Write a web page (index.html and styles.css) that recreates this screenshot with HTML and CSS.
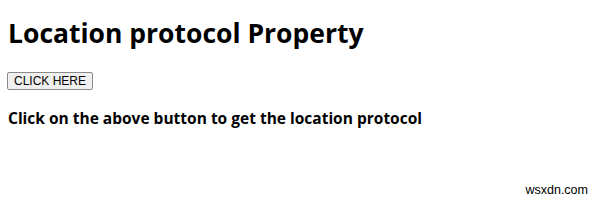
FILE: index.html
```html
<!DOCTYPE html>
<html>
<head>
<meta charset="utf-8">
<link rel="stylesheet" href="styles.css">
</head>
<body>
<h1 class="title">Location protocol Property</h1>
<button class="btn">CLICK HERE</button>
<h3 class="result">Click on the above button to get the location protocol</h3>
<div class="mark">wsxdn.com</div>
</body>
</html>
```
FILE: styles.css
```css
html, body { margin: 0; padding: 0; background: #fff; }
body { padding: 8px; font-family: "Open Sans", sans-serif; color: #000; height: 211px; box-sizing: border-box; position: relative; }
.title { font-size: 26.5px; font-weight: 700; margin: 7px 0 21px; line-height: 36px; }
.btn { display: block; font-family: "Liberation Sans", Arial, sans-serif; font-size: 12px; line-height: 14px; padding: 1px 6px; margin-left: -1px; border: 1px solid #8a8a8a; border-radius: 2px; background: #f0f0f0; color: #000; }
.result { font-size: 15.5px; font-weight: 700; margin: 17px 0; line-height: 22px; }
.mark { position: absolute; right: 12px; bottom: 14px; font-family: "Liberation Sans", Arial, sans-serif; font-size: 12.5px; color: #000; }
```
